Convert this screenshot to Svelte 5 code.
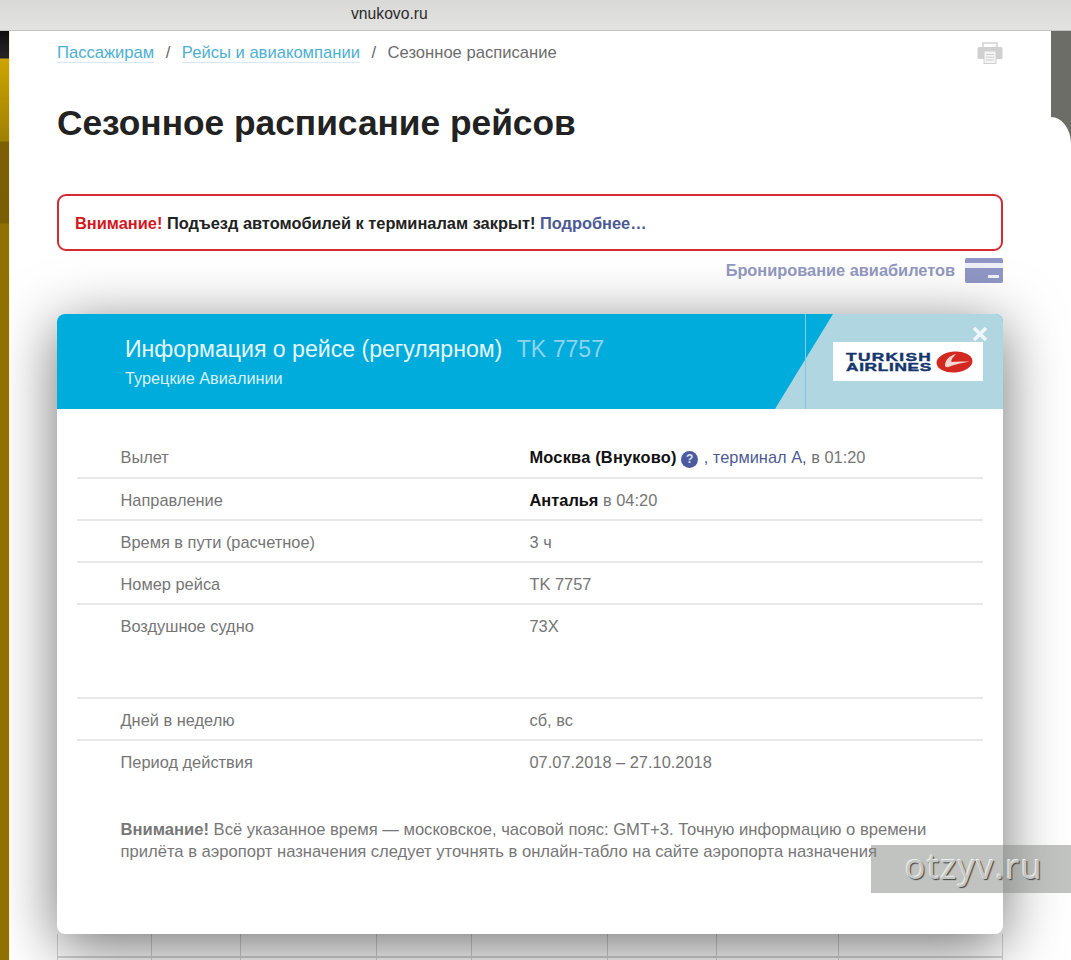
<script>
  const rowsTop = [
    { label: 'Время в пути (расчетное)', value: '3 ч' },
    { label: 'Номер рейса', value: 'TK 7757' },
    { label: 'Воздушное судно', value: '73X', tall: true }
  ];
  const rowsBottom = [
    { label: 'Дней в неделю', value: 'сб, вс' },
    { label: 'Период действия', value: '07.07.2018 – 27.10.2018', last: true }
  ];
  const cols = [94, 89, 136, 95, 136, 109, 122, 165];
</script>

<div class="page">
  <div class="left-strip"></div>
  <div class="right-strip"></div>

  <header class="topbar">vnukovo.ru</header>

  <main class="main">
    <div class="crumbs-row">
      <nav class="crumbs">
        <a href="#a">Пассажирам</a>
        <span class="sep">/</span>
        <a href="#b">Рейсы и авиакомпании</a>
        <span class="sep">/</span>
        <span>Сезонное расписание</span>
      </nav>
      <svg class="printer" width="26" height="22" viewBox="0 0 26 22">
        <path d="M6 5V1h14v4" fill="none" stroke="#d2d2d2" stroke-width="1.6" />
        <rect x="0.5" y="5" width="25" height="12" rx="1.5" fill="#d0d0d0" />
        <rect x="7" y="9" width="12" height="12.5" fill="#f4f4f4" stroke="#d0d0d0" />
        <path d="M9 12.5h8M9 15.2h8M9 18h8" stroke="#d0d0d0" stroke-width="1" />
      </svg>
    </div>

    <h1>Сезонное расписание рейсов</h1>

    <div class="alert">
      <b class="red">Внимание!</b> <b>Подъезд автомобилей к терминалам закрыт!</b> <b class="more">Подробнее…</b>
    </div>

    <div class="booking">
      <span>Бронирование авиабилетов</span>
      <svg width="38" height="25" viewBox="0 0 38 25">
        <rect width="38" height="25" rx="2" fill="#9097c6" />
        <rect y="5" width="38" height="5" fill="#eef0f7" />
        <rect x="23" y="17" width="11" height="3" fill="#eef0f7" />
      </svg>
    </div>

    <section class="modal">
      <div class="modal-head">
        <div class="head-text">
          <div class="head-title">Информация о рейсе (регулярном) <span class="flight">TK 7757</span></div>
          <div class="head-sub">Турецкие Авиалинии</div>
        </div>
        <svg class="head-bg" width="228" height="95" viewBox="0 0 228 95">
          <path d="M58 0H228V95H0Z" fill="#b0d6e2" />
          <path d="M30.500 0V95" stroke="#7fcbe3" stroke-width="1" />
        </svg>
        <div class="logo">
          <div class="logo-text"><span class="l1">TURKISH</span><span class="l2">AIRLINES</span></div>
          <svg width="37" height="22" viewBox="0 0 37 22">
            <ellipse cx="18.500" cy="11" rx="18" ry="10.500" fill="#d3281f" transform="rotate(-4 18.500 11)" />
            <path d="M9 15C9 9 13 5 20 3 16 7 15 9 15.500 11 21 10.500 28 10.500 34 10.500 27 12 20 13 15 15 13 16 11 17 9 15Z" fill="#f6d5cf" />
          </svg>
        </div>
        <svg class="close" width="16" height="16" viewBox="0 0 16 16">
          <path d="M2 2l12 12M14 2L2 14" stroke="#eef6f9" stroke-width="3.600" />
        </svg>
      </div>

      <div class="modal-body">
        <div class="row first">
          <div class="label">Вылет</div>
          <div class="value">
            <b class="airport">Москва (Внуково)</b>
            <span class="help">?</span>
            <span class="link">, терминал А,</span> в 01:20
          </div>
        </div>
        <div class="row">
          <div class="label">Направление</div>
          <div class="value"><b>Анталья</b> в 04:20</div>
        </div>
        {#each rowsTop as r}
          <div class="row" class:tall={r.tall}>
            <div class="label">{r.label}</div>
            <div class="value">{r.value}</div>
          </div>
        {/each}
        {#each rowsBottom as r}
          <div class="row" class:last={r.last}>
            <div class="label">{r.label}</div>
            <div class="value">{r.value}</div>
          </div>
        {/each}
        <p class="note">
          <b>Внимание!</b> Всё указанное время — московское, часовой пояс: GMT+3. Точную информацию о времени<br />
          прилёта в аэропорт назначения следует уточнять в онлайн-табло на сайте аэропорта назначения
        </p>
      </div>
    </section>

    <div class="under">
      {#each [0, 1] as line}
        <div class="under-row" class:second={line === 1}>
          {#each cols as w}
            <div class="under-cell" style="width: {w}px"></div>
          {/each}
        </div>
      {/each}
    </div>
  </main>

  <div class="mark">otzyv.ru</div>
</div>

<style>
  :global(body) {
    margin: 0;
    background: #fff;
  }

  .page {
    position: relative;
    width: 1071px;
    height: 960px;
    overflow: hidden;
    font-family: "Liberation Sans", Arial, sans-serif;
    background: #fff;
  }

  .left-strip {
    position: absolute;
    left: 0;
    top: 30px;
    width: 9px;
    height: 930px;
    z-index: 3;
    background: linear-gradient(#0e0e0e 0, #262626 28px, #cda400 29px, #a08000 111px, #7c5f05 112px, #7a5e06 193px, #8f7000 194px, #8f7000 930px);
    border-right: 1px solid #f7f1dc;
  }

  .right-strip {
    position: absolute;
    left: 1051px;
    top: 30px;
    width: 20px;
    height: 114px;
    z-index: 1;
    background: #6c6d66;
  }

  .right-strip::after {
    content: "";
    position: absolute;
    left: 0;
    bottom: 0;
    width: 20px;
    height: 27px;
    background: #fff;
    border-top-right-radius: 100% 100%;
  }

  .topbar {
    position: relative;
    z-index: 4;
    height: 31px;
    box-sizing: border-box;
    padding: 4px 0 0 351px;
    font-size: 15.700px;
    line-height: 19px;
    color: #2b2b2b;
    background: linear-gradient(#d9d9d7, #e2e2e0);
    border-bottom: 1px solid #c4c4c4;
  }

  .main {
    position: relative;
    z-index: 2;
    margin: 0 20px 0 9px;
    padding: 0 48px;
    background: #fff;
  }

  .crumbs-row {
    display: flex;
    justify-content: space-between;
    padding-top: 11px;
    height: 22px;
  }

  .crumbs {
    display: flex;
    font-size: 16.600px;
    line-height: 22px;
    color: #6d6d6d;
  }

  .crumbs a {
    color: #4bb0d4;
    text-decoration: none;
    border-bottom: 1px solid #d4e9f1;
    height: 20px;
  }

  .sep {
    margin: 0 11.500px;
    color: #666;
  }

  .printer {
    display: block;
  }

  h1 {
    margin: 36px 0 0;
    font-size: 35.300px;
    line-height: 46px;
    font-weight: 700;
    color: #222;
  }

  .alert {
    margin-top: 48px;
    height: 57px;
    box-sizing: border-box;
    padding: 17px 16px 0;
    border: 2px solid #d42a33;
    border-radius: 9px;
    font-size: 16.400px;
    line-height: 20px;
    color: #222;
  }

  .red {
    color: #d3171d;
  }

  .more {
    color: #4c5a93;
  }

  .booking {
    display: flex;
    justify-content: flex-end;
    align-items: center;
    gap: 10px;
    margin-top: 7px;
    height: 25px;
    font-size: 16.350px;
    font-weight: 700;
    color: #9398c0;
  }

  .booking svg {
    display: block;
  }

  .modal {
    position: relative;
    z-index: 2;
    margin-top: 31px;
    height: 620px;
    background: #fff;
    border-radius: 8px;
    box-shadow: 0 12px 60px rgba(0, 0, 0, 0.56);
    overflow: hidden;
  }

  .modal-head {
    position: relative;
    height: 95px;
    background: #00acdc;
    color: #fff;
  }

  .head-text {
    padding: 21px 0 0 68px;
  }

  .head-title {
    font-size: 23.100px;
    line-height: 28px;
    color: #e7f7fc;
  }

  .flight {
    margin-left: 8px;
    color: #8ed3ec;
  }

  .head-sub {
    margin-top: 5px;
    font-size: 16.300px;
    line-height: 20px;
    color: #d8f1f9;
  }

  .head-bg {
    position: absolute;
    top: 0;
    right: 0;
  }

  .logo {
    position: absolute;
    top: 28px;
    right: 20px;
    width: 150px;
    height: 39px;
    display: flex;
    align-items: center;
    gap: 4px;
    padding-left: 13px;
    box-sizing: border-box;
    background: #fff;
  }

  .logo svg {
    flex: none;
  }

  .logo-text {
    width: 86px;
    flex: none;
    font-size: 11.500px;
    line-height: 10px;
    font-weight: 700;
    color: #14356e;
    -webkit-text-stroke: 0.4px #14356e;
  }

  .logo-text span {
    display: block;
    transform: scaleX(1.5);
    transform-origin: left center;
    white-space: nowrap;
  }

  .l1 {
    letter-spacing: 0.9px;
  }

  .l2 {
    letter-spacing: 0.45px;
  }

  .close {
    position: absolute;
    top: 12px;
    right: 15px;
  }

  .modal-body {
    padding: 0 20px;
  }

  .row {
    display: flex;
    height: 42px;
    box-sizing: border-box;
    padding-top: 11px;
    border-bottom: 2px solid #e8e8e8;
    font-size: 16.400px;
    line-height: 20px;
    color: #757575;
  }

  .row.first {
    height: 70px;
    padding-top: 38px;
  }

  .row.tall {
    height: 94px;
  }

  .row.last {
    border-bottom: 0;
  }

  .label {
    width: 452.500px;
    padding-left: 43.500px;
    box-sizing: border-box;
    flex: none;
  }

  .value b {
    color: #111;
  }

  .airport {
    letter-spacing: 0.2px;
  }

  .link {
    color: #4c5a93;
  }

  .help {
    display: inline-block;
    width: 17px;
    height: 17px;
    margin: 0 1px 0 0;
    border-radius: 50%;
    background: #4c5a9f;
    color: #dfe3f2;
    font-size: 12px;
    font-weight: 700;
    line-height: 17px;
    text-align: center;
    vertical-align: 0;
  }

  .note {
    margin: 36px 0 0 43.500px;
    font-size: 16.600px;
    line-height: 22px;
    color: #777;
    white-space: nowrap;
  }

  .under {
    height: 26px;
  }

  .under-row {
    display: flex;
    height: 22px;
    border-bottom: 2px solid #d4d4d4;
  }

  .under-cell {
    box-sizing: border-box;
    border-left: 1px solid #d4d4d4;
  }

  .under-cell:last-child {
    border-right: 1px solid #d4d4d4;
  }

  .under-row.second {
    height: 10px;
    border-bottom: 0;
  }

  .mark {
    position: absolute;
    z-index: 5;
    left: 871px;
    top: 845px;
    width: 200px;
    height: 48px;
    box-sizing: border-box;
    padding-left: 34px;
    background: rgba(130, 135, 130, 0.5);
    font-family: "Open Sans", sans-serif;
    font-size: 34px;
    line-height: 42px;
    letter-spacing: 1.500px;
    color: #c4c6c4;
    text-shadow: -1px -1px 0 #eee, 1px 1px 1px #444;
  }
</style>
